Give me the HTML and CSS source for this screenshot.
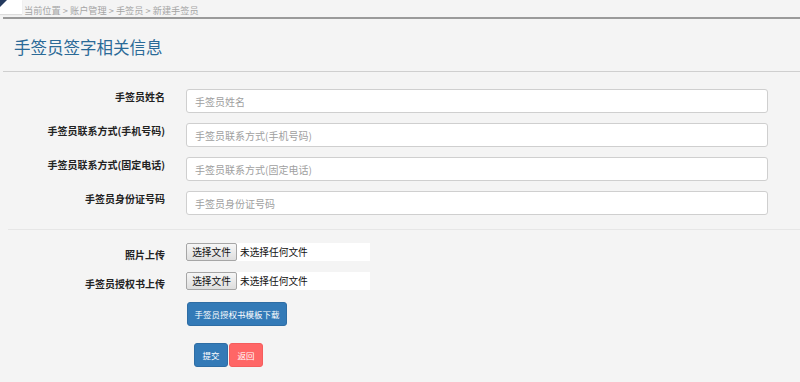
FILE: index.html
```html
<!DOCTYPE html>
<html lang="zh-CN">
<head>
    <meta charset="UTF-8" />
    <title>新建手签员</title>
    <link rel="stylesheet" href="styles.css">
</head>
<body>
    <div class="crumb-bar">
        <span class="corner"></span>
        <span class="crumb">当前位置 &gt; 账户管理 &gt; 手签员 &gt; 新建手签员</span>
    </div>

    <div class="page-title">
        <h3>手签员签字相关信息</h3>
    </div>

    <form class="sign-form">
        <div class="form-group">
            <label class="form-label">手签员姓名</label>
            <div class="control">
                <input class="form-control" type="text" placeholder="手签员姓名">
            </div>
        </div>
        <div class="form-group">
            <label class="form-label">手签员联系方式(手机号码)</label>
            <div class="control">
                <input class="form-control" type="text" placeholder="手签员联系方式(手机号码)">
            </div>
        </div>
        <div class="form-group">
            <label class="form-label">手签员联系方式(固定电话)</label>
            <div class="control">
                <input class="form-control" type="text" placeholder="手签员联系方式(固定电话)">
            </div>
        </div>
        <div class="form-group">
            <label class="form-label">手签员身份证号码</label>
            <div class="control">
                <input class="form-control" type="text" placeholder="手签员身份证号码">
            </div>
        </div>

        <div class="divider"></div>

        <div class="file-group">
            <label class="form-label">照片上传</label>
            <div class="file-box">
                <span class="file-btn">选择文件</span>
                <span class="file-name">未选择任何文件</span>
            </div>
        </div>
        <div class="file-group">
            <label class="form-label">手签员授权书上传</label>
            <div class="file-box">
                <span class="file-btn">选择文件</span>
                <span class="file-name">未选择任何文件</span>
            </div>
        </div>

        <div class="download-row">
            <button type="button" class="btn btn-primary btn-download">手签员授权书模板下载</button>
        </div>

        <div class="action-row">
            <button type="button" class="btn btn-primary btn-small">提交</button>
            <button type="button" class="btn btn-danger btn-small">返回</button>
        </div>
    </form>
</body>
</html>
```

FILE: styles.css
```css
body {
    margin: 0;
    background: #f4f4f4;
    font-family: "Noto Sans CJK SC", "Microsoft YaHei", sans-serif;
    color: #333;
}
.crumb-bar {
    display: flex;
    align-items: flex-start;
    height: 17px;
    margin-left: 3px;
    border-bottom: 2px solid #9a9a9a;
}
.corner {
    position: relative;
    width: 22px;
    height: 14px;
    margin-left: -3px;
    background: #fff;
    box-shadow: 0 1px 1px #ddd;
}
.corner::before {
    content: "";
    position: absolute;
    top: 0;
    left: 0;
    border-top: 7px solid #243a5e;
    border-right: 7px solid transparent;
}
.crumb {
    margin-left: 2px;
    margin-top: 5px;
    font-size: 9.2px;
    line-height: 11px;
    color: #a5a5a5;
}
.page-title {
    margin-left: 3px;
    height: 52px;
    border-bottom: 1px solid #cfcfcf;
}
.page-title h3 {
    margin: 0;
    padding: 18px 0 0 11px;
    font-size: 16.5px;
    font-weight: normal;
    line-height: 20px;
    color: #2b6a97;
}
.sign-form {
    padding-top: 17px;
}
.form-group {
    display: flex;
    align-items: flex-start;
    margin-bottom: 10px;
}
.form-label {
    width: 165px;
    flex-shrink: 0;
    text-align: right;
    font-size: 10px;
    font-weight: bold;
    line-height: 14px;
    padding-top: 1px;
    color: #222;
}
.control {
    flex: 1;
    margin: 0 32px 0 21px;
}
.form-control {
    display: block;
    width: 100%;
    height: 24px;
    box-sizing: border-box;
    padding: 0 8px;
    border: 1px solid #cfcfcf;
    border-radius: 3px;
    background: #fff;
    font-family: inherit;
    font-size: 10px;
    color: #555;
}
.form-control::placeholder {
    color: #a0a0a0;
}
.divider {
    margin: 14px 0 13px 8px;
    border-top: 1px solid #e6e6e6;
}
.file-group {
    display: flex;
    align-items: flex-start;
    height: 18px;
    margin-bottom: 11px;
}
.file-group .form-label {
    padding-top: 5px;
}
.file-box {
    display: flex;
    align-items: center;
    width: 184px;
    height: 18px;
    margin-left: 21px;
    background: #fff;
}
.file-btn {
    box-sizing: border-box;
    width: 51px;
    height: 18px;
    border: 1px solid #a6a6a6;
    border-radius: 2px;
    background: linear-gradient(#f6f6f6, #dedede);
    font-size: 9.7px;
    line-height: 16px;
    text-align: center;
    color: #111;
}
.file-name {
    margin-left: 3px;
    font-size: 9.7px;
    color: #111;
}
.download-row {
    display: flex;
    padding: 1px 0 0 187px;
}
.btn {
    border: 1px solid transparent;
    border-radius: 3px;
    color: #fff;
    font-family: inherit;
    cursor: pointer;
    padding: 0;
}
.btn-primary {
    background: #337ab7;
    border-color: #2e6da4;
}
.btn-danger {
    background: #ff6666;
    border-color: #f55d5d;
}
.btn-download {
    width: 100px;
    height: 24px;
    font-size: 8.5px;
}
.action-row {
    display: flex;
    padding: 17px 0 0 194px;
}
.btn-small {
    width: 34px;
    height: 24px;
    font-size: 8.5px;
}
.btn-small + .btn-small {
    margin-left: 1px;
}
```
